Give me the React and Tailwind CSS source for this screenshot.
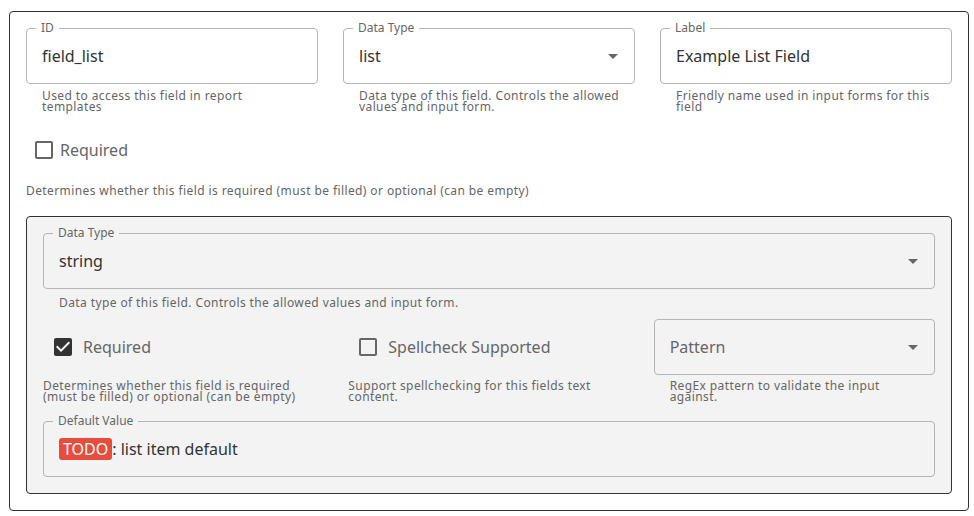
import React from 'react';

const ArrowDown = () => (
  <svg width="24" height="24" viewBox="0 0 24 24" className="shrink-0">
    <path d="M7 10l5 5 5-5z" fill="#666" />
  </svg>
);

const CheckBox = ({ checked }) =>
  checked ? (
    <svg width="18" height="18" viewBox="3 3 18 18" className="shrink-0">
      <path
        d="M19 3H5c-1.11 0-2 .9-2 2v14c0 1.1.89 2 2 2h14c1.11 0 2-.9 2-2V5c0-1.1-.89-2-2-2zm-9 14l-5-5 1.41-1.41L10 14.17l7.59-7.59L19 8l-9 9z"
        fill="#333"
      />
    </svg>
  ) : (
    <svg width="18" height="18" viewBox="3 3 18 18" className="shrink-0">
      <path
        d="M19 5v14H5V5h14m0-2H5c-1.1 0-2 .9-2 2v14c0 1.1.9 2 2 2h14c1.1 0 2-.9 2-2V5c0-1.1-.9-2-2-2z"
        fill="#666"
      />
    </svg>
  );

const Field = ({ label, select, children }) => (
  <fieldset className="border border-[#b5b5b5] rounded-[4px] px-[9px]">
    <legend className="px-[5px] text-[12px] leading-[12px] text-[#666]">{label}</legend>
    <div className="h-[49px] pb-[6px] pl-[6px] flex items-center justify-between text-[16px] text-[#333]">
      <span>{children}</span>
      {select && <ArrowDown />}
    </div>
  </fieldset>
);

const Help = ({ className = '', children }) => (
  <p className={`text-[12px] leading-[11px] tracking-[0.4px] text-[#666] ${className}`}>{children}</p>
);

const App = () => {
  const topFields = [
    { label: 'ID', value: 'field_list', help: 'Used to access this field in report templates', helpCls: 'mr-[16px]' },
    { label: 'Data Type', value: 'list', select: true, help: 'Data type of this field. Controls the allowed values and input form.', helpCls: 'mr-[9px]' },
    { label: 'Label', value: 'Example List Field', help: 'Friendly name used in input forms for this field', helpCls: 'mr-[12px]' },
  ];

  return (
    <div className="font-['Noto_Sans',sans-serif] ml-[9px] mt-[11px] w-[960px] border border-[#333] rounded-[4px] px-[16px] pt-[10px] pb-[16px] bg-white">
      {/* top row fields */}
      <div className="grid grid-cols-3 gap-x-[25px]">
        {topFields.map((f) => (
          <div key={f.label}>
            <Field label={f.label} select={f.select}>
              {f.value}
            </Field>
            <Help className={`mt-[6px] ml-[16px] ${f.helpCls}`}>{f.help}</Help>
          </div>
        ))}
      </div>

      <div className="mt-[29px] ml-[9px] h-[18px] flex items-center gap-[7px]">
        <CheckBox />
        <span className="text-[16px] leading-[18px] text-[#666]">Required</span>
      </div>
      <Help className="mt-[26px]">
        Determines whether this field is required (must be filled) or optional (can be empty)
      </Help>

      {/* list item definition */}
      <div className="mt-[20px] bg-[#f3f3f3] border border-[#333] rounded-[4px] px-[16px] pt-[10px] pb-[16px]">
        <Field label="Data Type" select>
          string
        </Field>
        <Help className="mt-[8px] ml-[16px]">
          Data type of this field. Controls the allowed values and input form.
        </Help>

        <div className="mt-[11px] grid grid-cols-3 gap-x-[24px]">
          <div>
            <div className="h-[56px] pl-[11px] flex items-center gap-[11px]">
              <CheckBox checked />
              <span className="text-[16px] text-[#666]">Required</span>
            </div>
            <Help className="mt-[5px]">
              Determines whether this field is required (must be filled) or optional (can be empty)
            </Help>
          </div>
          <div>
            <div className="h-[56px] pl-[11px] flex items-center gap-[11px]">
              <CheckBox />
              <span className="text-[16px] text-[#666]">Spellcheck Supported</span>
            </div>
            <Help className="mt-[5px]">Support spellchecking for this fields text content.</Help>
          </div>
          <div>
            <div className="h-[56px] border border-[#b5b5b5] rounded-[4px] pl-[15px] pr-[9px] flex items-center justify-between">
              <span className="text-[16px] text-[#666]">Pattern</span>
              <ArrowDown />
            </div>
            <Help className="mt-[5px] ml-[16px] mr-[16px]">RegEx pattern to validate the input against.</Help>
          </div>
        </div>

        <div className="mt-[13px]">
          <Field label="Default Value">
            <span className="inline-block bg-[#e74c3c] text-white rounded-[3px] px-[4px] leading-[22px]">TODO</span>
            : list item default
          </Field>
        </div>
      </div>
    </div>
  );
};

export default App;
